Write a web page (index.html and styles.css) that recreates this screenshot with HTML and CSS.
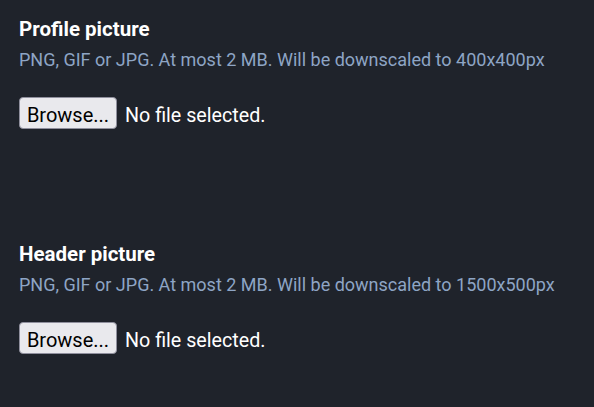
FILE: index.html
```html
<!DOCTYPE html>
<html>
<head>
<meta charset="utf-8">
<link rel="stylesheet" href="styles.css">
</head>
<body>
<div class="form">
  <div class="field">
    <div class="label">Profile picture</div>
    <div class="hint">PNG, GIF or JPG. At most 2 MB. Will be downscaled to 400x400px</div>
    <div class="file">
      <button class="browse" type="button">Browse...</button>
      <span class="status">No file selected.</span>
    </div>
  </div>
  <div class="field">
    <div class="label">Header picture</div>
    <div class="hint">PNG, GIF or JPG. At most 2 MB. Will be downscaled to 1500x500px</div>
    <div class="file">
      <button class="browse" type="button">Browse...</button>
      <span class="status">No file selected.</span>
    </div>
  </div>
</div>
</body>
</html>
```

FILE: styles.css
```css
html, body {
  margin: 0;
  padding: 0;
  background: #1f232b;
  height: 100%;
}
body {
  font-family: Roboto, "Noto Sans", sans-serif;
  color: #fff;
}
.form {
  display: flex;
  flex-direction: column;
  gap: 113px;
  padding: 17px 19px 0 19px;
}
.field {
  display: flex;
  flex-direction: column;
}
.label {
  font-size: 20.5px;
  font-weight: 700;
  line-height: 24px;
}
.hint {
  font-size: 18px;
  line-height: 22px;
  color: #8ea5c5;
  margin-top: 8px;
}
.file {
  display: flex;
  align-items: center;
  gap: 8px;
  margin-top: 26px;
}
.browse {
  box-sizing: border-box;
  font-family: Roboto, "Noto Sans", sans-serif;
  font-size: 20px;
  color: #000;
  background: #e9e9ed;
  border: 1px solid #8f8f9d;
  border-radius: 4px;
  height: 32px;
  width: 98px;
  padding: 3px 0 0 0;
}
.status {
  font-size: 19.7px;
  color: #fff;
  padding-top: 4px;
}
```
